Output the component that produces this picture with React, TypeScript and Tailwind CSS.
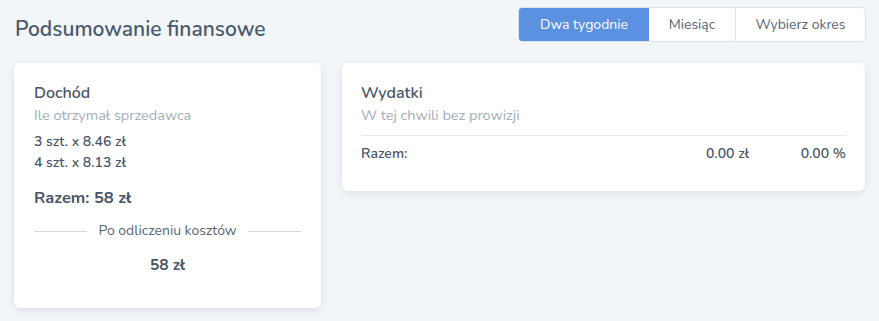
export default function App() {
  return (
    <div
      className="min-h-[321px] w-full bg-[#f3f6f9] px-[14px] pt-[7px] text-[#4a5568]"
      style={{ fontFamily: 'Nunito, Lato, "Open Sans", sans-serif' }}
    >
      <div className="flex items-start justify-between">
        <h1 className="pt-[9px] pl-px text-[21px] leading-[26px] font-semibold text-[#4a5a6e]">Podsumowanie finansowe</h1>
        <div className="mr-[-1px] flex h-[35px] overflow-hidden rounded border border-[#dde3ea] bg-white text-[14px]">
          <button className="w-[130px] bg-[#5b91e0] text-white">Dwa tygodnie</button>
          <button className="w-[87px] border-r border-[#dde3ea] text-[#5a6475]">Miesiąc</button>
          <button className="w-[129px] text-[#5a6475]">Wybierz okres</button>
        </div>
      </div>

      <div className="mt-[21px] flex items-start gap-[21px]">
        <div className="h-[245px] w-[307px] rounded-md bg-white px-5 pt-[19px] shadow-[0_2px_8px_rgba(40,60,90,0.12)]">
          <div className="text-[16px] leading-[22px] font-semibold text-[#4a5568]">Dochód</div>
          <div className="mt-px text-[14.5px] leading-5 text-[#a4adba]">Ile otrzymał sprzedawca</div>
          <div className="mt-[6px] text-[14px] font-semibold leading-[21px] text-[#4a5568]">
            <div>3 szt. x 8.46 zł</div>
            <div>4 szt. x 8.13 zł</div>
          </div>
          <div className="mt-[13px] text-[16.5px] leading-6 font-bold text-[#4a5568]">Razem: 58 zł</div>
          <div className="mt-[11px] flex items-center gap-[11px] text-[14px] leading-5 text-[#5a6475]">
            <div className="h-px flex-1 bg-[#d4d8dd]" />
            <span>Po odliczeniu kosztów</span>
            <div className="h-px flex-1 bg-[#d4d8dd]" />
          </div>
          <div className="mt-[13px] text-center text-[15.5px] leading-[22px] font-bold text-[#4a5568]">58 zł</div>
        </div>

        <div className="h-[128px] w-[523px] rounded-md bg-white px-[19px] pt-[19px] shadow-[0_2px_8px_rgba(40,60,90,0.12)]">
          <div className="text-[16px] leading-[22px] font-semibold text-[#4a5568]">Wydatki</div>
          <div className="mt-px text-[14.5px] leading-5 text-[#a4adba]">W tej chwili bez prowizji</div>
          <div className="mt-[10px] h-px bg-[#e6ebf1]" />
          <div className="mt-[8px] flex text-[14px] leading-5 font-semibold text-[#4a5568]">
            <span className="flex-1">Razem:</span>
            <span className="w-[100px] text-right">0.00 zł</span>
            <span className="w-[97px] text-right">0.00 %</span>
          </div>
        </div>
      </div>
    </div>
  );
}
